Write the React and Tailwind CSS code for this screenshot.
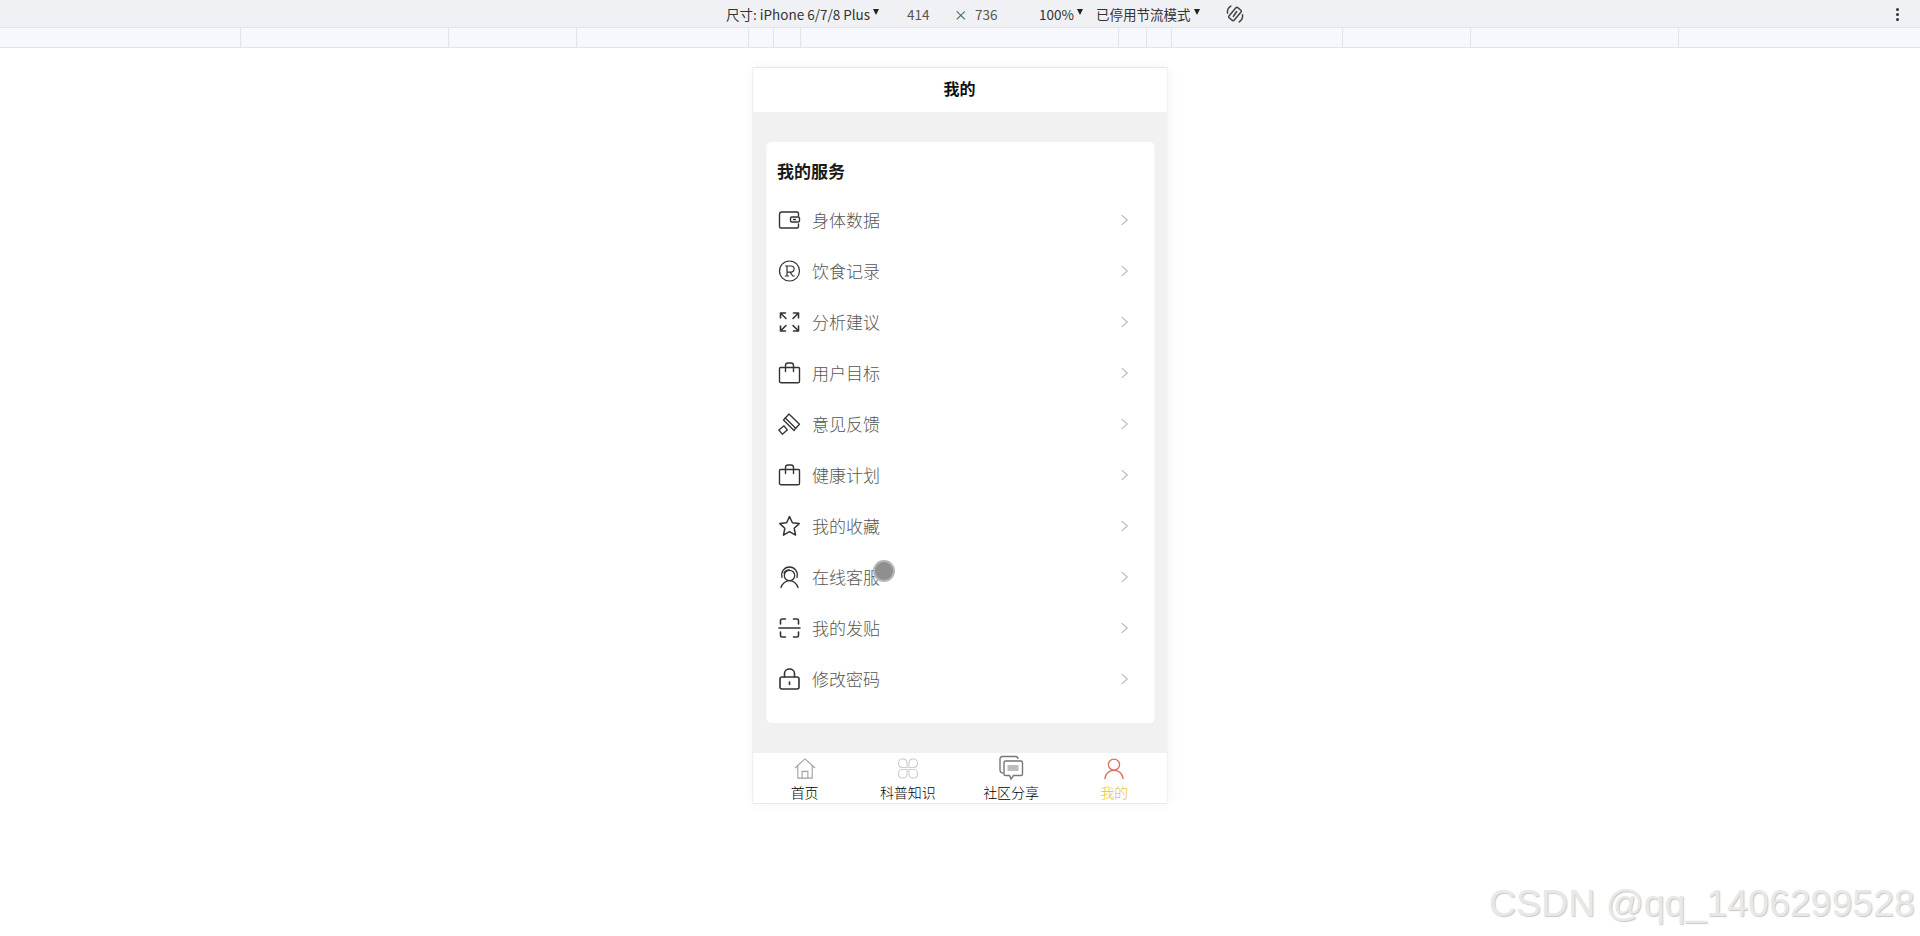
const S = ({ children, className = "w-6 h-6", sw = 1.4, vb = "0 0 24 24" }) => (
  <svg viewBox={vb} className={className} fill="none" stroke="currentColor" strokeWidth={sw} strokeLinecap="round" strokeLinejoin="round">{children}</svg>
);
const Bag = () => <S><path d="M3 6.500h18c.6 0 1 .4 1 1v12.700c0 .9-.7 1.600-1.600 1.600H3.600c-.9 0-1.600-.7-1.600-1.600V7.500c0-.6.4-1 1-1z" /><path d="M8 10.500V4.500C8 3.100 9.100 2 10.500 2h3C14.900 2 16 3.100 16 4.500v6" /></S>;
const icons = [
  <S><path d="M21 8V5.500C21 4.700 20.300 4 19.500 4H4.500C3.100 4 2 5.100 2 6.500v12C2 19.400 2.700 20 3.500 20h16c.8 0 1.500-.6 1.500-1.500V16" /><rect x="13" y="9" width="9" height="5" rx="1.500" /><path d="M16 11.500h2" /></S>,
  <S sw={1.2}><circle cx="12" cy="12" r="10" /><path d="M8 7h5.500a3 3 0 0 1 0 6.200H9.500M9.500 7v10M7.800 17h3.400M12.500 13.200l2.800 3.800h1.500" /></S>,
  <S sw={1.6}><path d="M3 8V3h5M3 3l5.500 5.500M16 3h5v5M21 3l-5.500 5.500M3 16v5h5M3 21l5.500-5.500M21 16v5h-5M21 21l-5.500-5.500" /></S>,
  <Bag />,
  <S sw={1.3}><path d="M11.500 2l10.500 10.200-3.800 4L7.800 6z" /><path d="M7.800 6L6 8l10.500 10.500 1.700-2.300" /><path d="M6.500 13.800l3.300 4.200-5 4.200L1.300 18z" /></S>,
  <Bag />,
  <S sw={1.5}><path d="M12 2.500l2.900 6.300 6.800.8-5 4.700 1.300 6.800-6-3.400-6 3.400 1.300-6.800-5-4.700 6.800-.8z" /></S>,
  <S sw={1.3}><circle cx="12" cy="10.500" r="5.200" /><path d="M4.500 12.500C3 7 6.800 2 12 2s9 5 7.500 10.500M3.500 22.500c1-3.800 4.500-6.800 8.500-6.800s7.500 3 8.500 6.800M6.500 8c1.200-2 3.200-3 5.500-3" /></S>,
  <S sw={1.6}><path d="M3 8V4.500C3 3.700 3.700 3 4.500 3H8M16 3h3.500c.8 0 1.500.7 1.500 1.500V8M3 16v3.500c0 .8.7 1.500 1.500 1.500H8M16 21h3.500c.8 0 1.500-.7 1.500-1.500V16M1.500 12h21" /></S>,
  <S sw={1.6}><rect x="2.500" y="10" width="19" height="12" rx="2" /><path d="M7 10V6.500C7 3.800 9.200 2 12 2s5 1.800 5 4.500V10" /><path d="M12 15v2.500" /></S>,
];
const rows = ["身体数据","饮食记录","分析建议","用户目标","意见反馈","健康计划","我的收藏","在线客服","我的发贴","修改密码"];
const rulerSegs = [241,208,128,172,25,27,318,28,25,171,128,208,0];

function Caret(){ return <span className="inline-block ml-[3px] -translate-y-[3px] w-0 h-0 border-l-[3.500px] border-r-[3.500px] border-t-[6px] border-l-transparent border-r-transparent border-t-[#222]" />; }

function Tab({ label, active, children }) {
  return (
    <div className="flex-1 flex flex-col items-center h-full">
      <div className="h-[30px] flex items-center justify-center">{children}</div>
      <div className={`text-[14px] leading-[14px] mt-[2px] font-light ${active ? "text-[#e8c22f]" : "text-[#000]"}`}>{label}</div>
    </div>
  );
}

export default function App() {
  return (
    <div className="relative w-[1920px] h-[936px] bg-white overflow-hidden" style={{ fontFamily: '"Noto Sans CJK SC", "Noto Sans", sans-serif' }}>
      <div className="h-[28px] bg-[#f0f1f4] flex items-center pt-[2px] text-[13.500px] text-[#333] border-b border-[#e3e4e8]">
        <div className="w-[726px]" />
        <div className="w-[181px] whitespace-nowrap flex items-center">尺寸: iPhone 6/7/8 Plus<Caret /></div>
        <div className="w-[47px] text-[#555]">414</div>
        <div className="w-[21px] text-[#555]">×</div>
        <div className="w-[64px] text-[#555]">736</div>
        <div className="w-[57px] whitespace-nowrap flex items-center">100%<Caret /></div>
        <div className="w-[139px] whitespace-nowrap flex items-center">已停用节流模式<Caret /></div>
        <svg viewBox="0 0 24 24" className="w-[20px] h-[20px] -ml-[10px] -mt-[2px] text-[#444]" fill="none" stroke="currentColor" strokeWidth="1.800" strokeLinecap="round"><rect x="8" y="4" width="8" height="16" rx="1.500" transform="rotate(40 12 12)" /><path d="M7 2.500C4 4.500 2.500 8 3 11M17 21.500c3-2 4.500-5.500 4-8.500" /><path d="M10 15l4-6" /></svg>
        <div className="flex-1" />
        <div className="flex flex-col gap-[2px] mr-[21px]"><i className="block w-[3px] h-[3px] rounded-full bg-[#333]"/><i className="block w-[3px] h-[3px] rounded-full bg-[#333]"/><i className="block w-[3px] h-[3px] rounded-full bg-[#333]"/></div>
      </div>
      <div className="h-[20px] bg-[#f6f8fd] border-b border-[#e2e4ea] flex">
        {rulerSegs.map((w, i) => (
          <div key={i} style={w ? { width: w } : { flex: 1 }} className={w ? "border-r border-[#dde3ef]" : ""} />
        ))}
      </div>

      <div className="mt-[19px] mx-auto w-[415px] h-[737px] flex flex-col shadow-[0_0_12px_rgba(0,0,0,0.05)] border-x border-y border-[#e8e8e8] -translate-x-[0.5px]">
        <div className="h-[44px] pb-[5px] bg-white flex items-center justify-center font-bold text-[16px] text-[#111]">我的</div>
        <div className="flex-1 bg-[#f1f1f1] pl-[13px] pr-[12px] pt-[30px]">
          <div className="h-[581px] bg-white rounded-[5px] px-[11px] flex flex-col">
            <div className="h-[52px] pt-[6px] flex items-center font-bold text-[17px] text-[#1a1a1a]">我的服务</div>
            {rows.map((r, i) => (
              <div key={r} className="h-[51px] flex items-center flex-none">
                <div className="w-[24px] h-[24px] text-[#333] mr-[11px] flex-none">{icons[i]}</div>
                <div className="text-[17px] text-[#555] font-light">{r}</div>
                <svg viewBox="0 0 10 14" className="ml-auto mr-[15px] w-[8px] h-[12px] text-[#b5b5b5]" fill="none" stroke="currentColor" strokeWidth="1.300"><path d="M1.500 1l7 6-7 6" /></svg>
              </div>
            ))}
          </div>
        </div>
        <div className="h-[50px] bg-white flex">
          <Tab label="首页">
            <svg viewBox="0 0 24 24" className="w-[23px] h-[23px] text-[#a3a3a3]" fill="none" stroke="currentColor" strokeWidth="1.200"><path d="M1.500 11.500L12 2l10.500 9.500M4.500 9.500V22h15V9.500M9 22v-7h6v7" /></svg>
          </Tab>
          <Tab label="科普知识">
            <svg viewBox="0 0 24 24" className="w-[23px] h-[23px] text-[#cfcfcf]" fill="none" stroke="currentColor" strokeWidth="1.200"><path d="M11 11H6a4.500 4.500 0 1 1 5-5zM13 11h5a4.500 4.500 0 1 0-5-5zM11 13H6a4.500 4.500 0 1 0 5 5zM13 13h5a4.500 4.500 0 1 1-5 5z" /></svg>
          </Tab>
          <Tab label="社区分享">
            <svg viewBox="0 0 26 26" className="w-[26px] h-[26px] text-[#777]" fill="none" stroke="currentColor" strokeWidth="1.400"><path d="M5 18C2.500 18 1.500 17 1.500 15V4c0-1.500 1-2.500 2.500-2.500h13c1.500 0 2.500 1 2.500 2.500" /><path d="M7 6h15.500c1 0 1.500.5 1.500 1.500V19c0 1-.5 1.500-1.500 1.500H15l-2.500 3.500-1.500-3.500H7c-1 0-1.500-.5-1.500-1.500V7.500C5.500 6.500 6 6 7 6z" /><rect x="9" y="10" width="11" height="6" fill="#bdbdbd" stroke="none" /></svg>
          </Tab>
          <Tab label="我的" active>
            <svg viewBox="0 0 24 24" className="w-[23px] h-[23px] text-[#e0685e]" fill="none" stroke="currentColor" strokeWidth="1.400" strokeLinecap="round"><circle cx="12" cy="8" r="5.800" /><path d="M2.500 22.500C3.500 17 7.200 14 12 14s8.500 3 9.500 8.500" /></svg>
          </Tab>
        </div>
      </div>

      <div className="absolute left-[873px] top-[560px] w-[22px] h-[22px] rounded-full bg-[#8f8f8f] border-2 border-[#b5b5b5]" />
      <div className="absolute left-[1489px] top-[881px] text-[37.500px] leading-[44px] whitespace-nowrap text-[#e8e8e8]" style={{ fontFamily: '"Liberation Sans", sans-serif', textShadow: "1px 1px 1px #c8c8c8" }}>CSDN @qq_1406299528</div>
    </div>
  );
}
